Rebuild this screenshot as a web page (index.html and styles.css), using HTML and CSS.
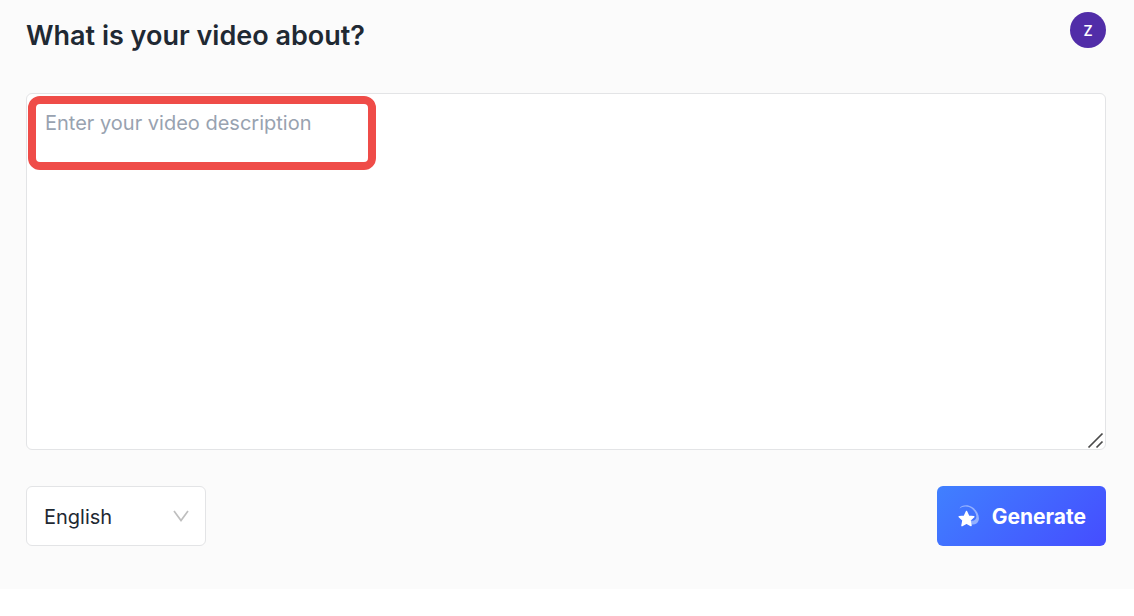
FILE: index.html
```html
<!DOCTYPE html>
<html lang="en">
<head>
    <meta charset="UTF-8">
    <meta name="viewport" content="width=device-width, initial-scale=1.0">
    <title>What is your video about?</title>
    <link rel="stylesheet" href="styles.css">
</head>
<body>

    <main class="panel">
        <header class="header">
            <h1 class="title"><label for="description">What is your video about?</label></h1>
            <button type="button" class="avatar">Z</button>
        </header>

        <form class="video-form">
            <div class="description-box">
                <textarea id="description" class="description" rows="11" placeholder="Enter your video description"></textarea>
                <div class="highlight"></div>
                <svg class="resize-grip" viewBox="0 0 18 18" aria-hidden="true">
                    <path d="M1.500 15.500L15.500 1.500M9.500 15.500L15.500 9.500"/>
                </svg>
            </div>

            <div class="actions">
                <div class="language-box">
                    <select class="language" aria-label="Language">
                        <option>English</option>
                    </select>
                    <svg class="chevron" viewBox="0 0 16 12" aria-hidden="true">
                        <path d="M1 1l7 9.500L15 1"/>
                    </svg>
                </div>

                <button type="button" class="generate">
                    <svg class="star-icon" viewBox="0 0 22 22" aria-hidden="true">
                        <path class="swirl" d="M2.500 3.500C4 .5 10-1 15 2C20 5 23 11 21.600 15.500C20.500 19 17 20.500 13 19L14 15.500C17 16.500 19.500 14 19.400 11.500C19 7.500 16 3.500 12 2C8.500 .8 4.800 1.500 2.500 3.500Z"/>
                        <path class="star" d="M9.500 6.500l2.200 4.700 5.100.600-3.800 3.500 1 5.300-4.500-2.600L5 20.600l1-5.300L2.200 11.800l5.100-.6z"/>
                    </svg>
                    Generate
                </button>
            </div>
        </form>
    </main>

</body>
</html>
```
FILE: styles.css
```css
* {
    box-sizing: border-box;
}
body {
    margin: 0;
    background: #ffffff;
    color: #1f2933;
    font-family: Inter, "Liberation Sans", sans-serif;
}
.panel {
    background: #fbfbfb;
    padding: 12px 28px 43px 26px;
}
.header {
    display: flex;
    justify-content: space-between;
    align-items: flex-start;
    margin-bottom: 33px;
}
.title {
    margin: 0;
    font-size: 27px;
    line-height: 48px;
    font-weight: 600;
}
.avatar {
    width: 36px;
    height: 36px;
    padding: 0;
    border: none;
    border-radius: 50%;
    background: #512da8;
    color: #ffffff;
    font-family: inherit;
    font-size: 14px;
    font-weight: 600;
    cursor: pointer;
}

/* description */
.description-box {
    position: relative;
}
.description {
    display: block;
    width: 100%;
    padding: 14px 18px 11px;
    border: 1px solid #e3e4e6;
    border-radius: 6px;
    background: #ffffff;
    color: inherit;
    font-family: inherit;
    font-size: 20px;
    line-height: 30px;
    resize: none;
}
.description::placeholder {
    color: #98a2b0;
}
.highlight {
    position: absolute;
    top: 3px;
    left: 2px;
    width: 348px;
    height: 74px;
    border: 8px solid #ef4c48;
    border-radius: 12px;
    pointer-events: none;
}
.resize-grip {
    position: absolute;
    right: 1px;
    bottom: 0;
    width: 18px;
    height: 18px;
    fill: none;
    stroke: #4a4a4a;
    stroke-width: 1.7;
    pointer-events: none;
}

/* bottom row */
.actions {
    display: flex;
    justify-content: space-between;
    margin-top: 36px;
}
.language-box {
    position: relative;
}
.language {
    width: 180px;
    height: 60px;
    padding: 2px 17px 0;
    border: 1px solid #e3e4e6;
    border-radius: 6px;
    background: #ffffff;
    color: inherit;
    font-family: inherit;
    font-size: 20px;
    appearance: none;
}
.chevron {
    position: absolute;
    top: 24px;
    right: 17px;
    width: 16px;
    height: 12px;
    fill: none;
    stroke: #bfbfbf;
    stroke-width: 1.7;
    pointer-events: none;
}
.generate {
    display: flex;
    align-items: center;
    gap: 13px;
    height: 60px;
    padding: 0 20px;
    border: none;
    border-radius: 6px;
    background: linear-gradient(135deg, #4080ff, #454dff);
    color: #ffffff;
    font-family: inherit;
    font-size: 21px;
    font-weight: 700;
    cursor: pointer;
}
.star-icon {
    width: 22px;
    height: 22px;
}
.swirl {
    fill: #93b0ff;
}
.star {
    fill: #ffffff;
    stroke: #ffffff;
    stroke-width: 1.5;
    stroke-linejoin: round;
}
```
